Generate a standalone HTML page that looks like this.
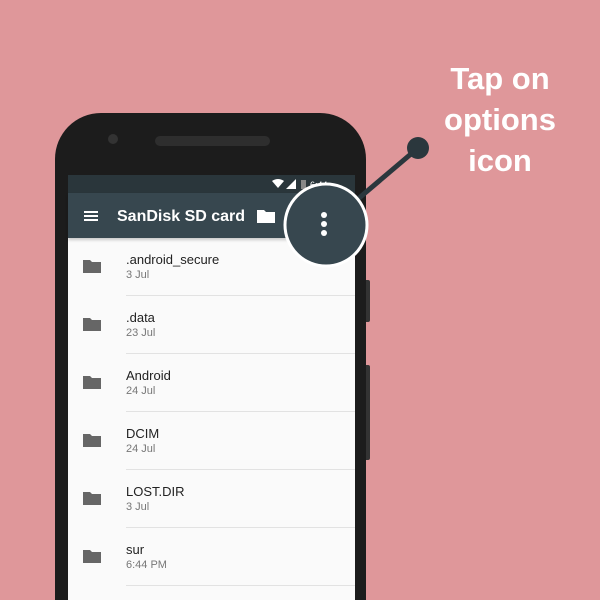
<!DOCTYPE html>
<html style="width:600px;height:600px;overflow:hidden"><head><meta charset="utf-8"><style>
*{margin:0;padding:0;box-sizing:border-box}
body{width:600px;height:600px;overflow:hidden;background:#df979a;position:relative;font-family:"Liberation Sans",Arial,sans-serif}
.abs{position:absolute}
.row{position:absolute;left:68px;width:287px;height:58px}
.row .n{position:absolute;left:58px;top:14px;font-size:13px;color:#222}
.row .d{position:absolute;left:58px;top:31px;font-size:11px;color:#777}
.row .sep{position:absolute;left:58px;right:0;bottom:0;height:1px;background:#e2e2e2}
.row svg{position:absolute;left:15px;top:21px}
.txt{position:absolute;left:420px;width:160px;text-align:center;color:#fff;font-weight:bold;font-size:31px;line-height:41px;top:58px}
</style></head><body>
<div class="abs" style="left:362px;top:280px;width:8px;height:42px;background:#333;border-radius:2px"></div>
<div class="abs" style="left:362px;top:365px;width:8px;height:95px;background:#333;border-radius:2px"></div>
<div class="abs" style="left:55px;top:113px;width:311px;height:487px;background:#1c1c1c;border-radius:46px 46px 0 0"></div>
<div class="abs" style="left:108px;top:134px;width:10px;height:10px;border-radius:50%;background:#333"></div>
<div class="abs" style="left:155px;top:136px;width:115px;height:10px;border-radius:5px;background:#2e2e2e"></div>
<div class="abs" style="left:68px;top:175px;width:287px;height:425px;background:#fafafa"></div>
<div class="abs" style="left:68px;top:175px;width:287px;height:18px;background:#2a363b"></div>
<div class="abs" style="left:68px;top:193px;width:287px;height:45px;background:#37474f;box-shadow:0 2px 3px rgba(0,0,0,.2)"></div>
<svg class="abs" style="left:272px;top:178px" width="60" height="13"><path d="M0 3 Q6 -1 12 3 L6 10Z" fill="#fff"/><path d="M14 11 L24 1 L24 11Z" fill="#fff"/><rect x="29" y="2" width="5" height="9" fill="#888"/><text x="38" y="10" font-size="9" fill="#fff" font-family="Liberation Sans">6:44</text></svg>
<div class="abs" style="left:84px;top:211px;width:14px;height:2px;background:#fff;box-shadow:0 4px 0 #fff,0 8px 0 #fff"></div>
<div class="abs" style="left:117px;top:208px;color:#fff;font-size:16px;font-weight:bold">SanDisk SD card</div>
<svg class="abs" style="left:257px;top:209px" width="18" height="14"><path d="M0 1 H7 L9 3 H18 V14 H0Z" fill="#fff"/></svg>

<div class="row" style="top:238px"><svg width="18" height="14"><path d="M0 1 H7 L9 3 H18 V14 H0Z" fill="#666"/></svg><div class="n">.android_secure</div><div class="d">3 Jul</div><div class="sep"></div></div>
<div class="row" style="top:296px"><svg width="18" height="14"><path d="M0 1 H7 L9 3 H18 V14 H0Z" fill="#666"/></svg><div class="n">.data</div><div class="d">23 Jul</div><div class="sep"></div></div>
<div class="row" style="top:354px"><svg width="18" height="14"><path d="M0 1 H7 L9 3 H18 V14 H0Z" fill="#666"/></svg><div class="n">Android</div><div class="d">24 Jul</div><div class="sep"></div></div>
<div class="row" style="top:412px"><svg width="18" height="14"><path d="M0 1 H7 L9 3 H18 V14 H0Z" fill="#666"/></svg><div class="n">DCIM</div><div class="d">24 Jul</div><div class="sep"></div></div>
<div class="row" style="top:470px"><svg width="18" height="14"><path d="M0 1 H7 L9 3 H18 V14 H0Z" fill="#666"/></svg><div class="n">LOST.DIR</div><div class="d">3 Jul</div><div class="sep"></div></div>
<div class="row" style="top:528px"><svg width="18" height="14"><path d="M0 1 H7 L9 3 H18 V14 H0Z" fill="#666"/></svg><div class="n">sur</div><div class="d">6:44 PM</div><div class="sep"></div></div>

<svg class="abs" style="left:0;top:0" width="600" height="600">
<line x1="352" y1="204" x2="418" y2="148" stroke="#2b373d" stroke-width="5"/>
<circle cx="418" cy="148" r="11" fill="#2b373d"/>
<circle cx="326" cy="225" r="41" fill="#37474f" stroke="#fff" stroke-width="3"/>
<circle cx="324" cy="215" r="3" fill="#fff"/><circle cx="324" cy="224" r="3" fill="#fff"/><circle cx="324" cy="233" r="3" fill="#fff"/>
</svg>
<div class="txt">Tap on<br>options<br>icon</div>
</body></html>
